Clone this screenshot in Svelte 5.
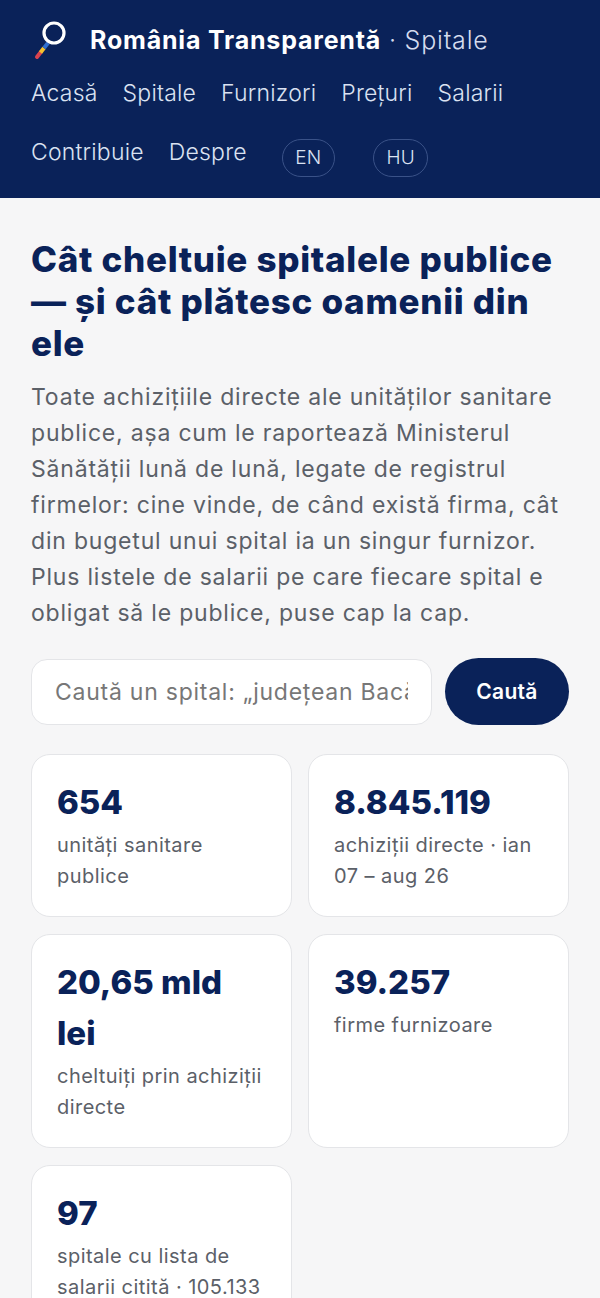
<script>
	const nav = ['Acasă', 'Spitale', 'Furnizori', 'Prețuri', 'Salarii', 'Contribuie', 'Despre'];
	const langs = ['EN', 'HU'];
	const stats = [
		{ value: '654', label: 'unități sanitare publice' },
		{ value: '8.845.119', label: 'achiziții directe · ian 07 – aug 26' },
		{ value: '20,65 mld lei', label: 'cheltuiți prin achiziții directe' },
		{ value: '39.257', label: 'firme furnizoare' },
		{ value: '97', label: 'spitale cu lista de salarii citită · 105.133 posturi' }
	];
</script>

<header>
	<div class="brand">
		<svg class="logo" width="40" height="44" viewBox="0 0 40 44" aria-hidden="true">
			<line x1="6" y1="39" x2="9.5" y2="34.5" stroke="#d9434e" stroke-width="4" stroke-linecap="round" />
			<line x1="9.5" y1="34.5" x2="13" y2="30" stroke="#f5c22e" stroke-width="4" />
			<line x1="13" y1="30" x2="17" y2="25" stroke="#2f6fd0" stroke-width="4" />
			<circle cx="23" cy="15" r="10" fill="none" stroke="#fff" stroke-width="3.2" />
		</svg>
		<span class="title"><strong>România Transparentă</strong> · Spitale</span>
	</div>
	<nav>
		{#each nav as item}
			<a href="#top">{item}</a>
		{/each}
		{#each langs as lang}
			<a class="lang" href="#top">{lang}</a>
		{/each}
	</nav>
</header>

<main>
	<h1>Cât cheltuie spitalele publice — și cât plătesc oamenii din ele</h1>
	<p class="lead">
		Toate achizițiile directe ale unităților sanitare publice, așa cum le raportează Ministerul
		Sănătății lună de lună, legate de registrul firmelor: cine vinde, de când există firma, cât
		din bugetul unui spital ia un singur furnizor. Plus listele de salarii pe care fiecare spital e
		obligat să le publice, puse cap la cap.
	</p>

	<form class="search" onsubmit={(e) => e.preventDefault()}>
		<input type="text" placeholder="Caută un spital: „județean Bacău”" />
		<button type="submit">Caută</button>
	</form>

	<div class="stats">
		{#each stats as stat}
			<div class="card">
				<div class="value">{stat.value}</div>
				<div class="label">{stat.label}</div>
			</div>
		{/each}
	</div>
</main>

<style>
	:global(body) {
		background: #f6f6f7;
		font-family: Inter, "Liberation Sans", sans-serif;
		overflow: hidden;
		height: 1298px;
	}

	header {
		background: #0a2259;
		padding: 19px 31px 0;
		height: 198px;
		box-sizing: border-box;
		color: #fff;
	}

	.brand {
		display: flex;
		align-items: center;
		gap: 19px;
		height: 42px;
	}

	.logo {
		flex: none;
	}

	.title {
		font-size: 25px;
		font-weight: 300;
		letter-spacing: 0.8px;
		color: #d5dcee;
	}

	.title strong {
		font-weight: 700;
		color: #fff;
	}

	nav {
		display: flex;
		flex-wrap: wrap;
		align-items: center;
		column-gap: 25px;
		margin-top: 3px;
	}

	nav a {
		font-size: 23px;
		line-height: 59px;
		font-weight: 300;
		letter-spacing: 0.2px;
		color: #dbe2f2;
		text-decoration: none;
	}

	nav a.lang {
		font-size: 19px;
		line-height: 36px;
		padding: 0 12.5px;
		margin: 10px 3px 0 10px;
		border: 1px solid #3a5288;
		border-radius: 19px;
	}

	main {
		padding: 40px 31px 0;
	}

	h1 {
		margin: 0;
		font-size: 35px;
		line-height: 42px;
		font-weight: 800;
		letter-spacing: 0.7px;
		color: #0a2259;
	}

	.lead {
		margin: 15px 0 0;
		font-size: 23px;
		line-height: 36px;
		letter-spacing: 0.8px;
		color: #5b6068;
	}

	.search {
		display: flex;
		align-items: flex-end;
		gap: 13px;
		margin-top: 27px;
	}

	input {
		flex: 1;
		min-width: 0;
		height: 66px;
		box-sizing: border-box;
		padding: 0 23px;
		font: inherit;
		font-size: 23px;
		letter-spacing: 0.75px;
		background: #fff;
		border: 1px solid #e4e5e8;
		border-radius: 16px;
	}

	input::placeholder {
		color: #777;
	}

	button {
		width: 124px;
		height: 67px;
		font: inherit;
		font-size: 21px;
		font-weight: 600;
		letter-spacing: 0.3px;
		color: #fff;
		background: #0a2259;
		border: none;
		border-radius: 34px;
	}

	.stats {
		display: grid;
		grid-template-columns: 1fr 1fr;
		gap: 17px 16px;
		margin-top: 29px;
	}

	.card {
		padding: 22px 25px 24px;
		background: #fff;
		border: 1px solid #e4e5e8;
		border-radius: 19px;
	}

	.value {
		font-size: 33px;
		line-height: 51px;
		font-weight: 800;
		color: #0a2259;
	}

	.label {
		margin-top: 2px;
		font-size: 20px;
		line-height: 31px;
		letter-spacing: 0.45px;
		color: #5b6068;
	}
</style>
